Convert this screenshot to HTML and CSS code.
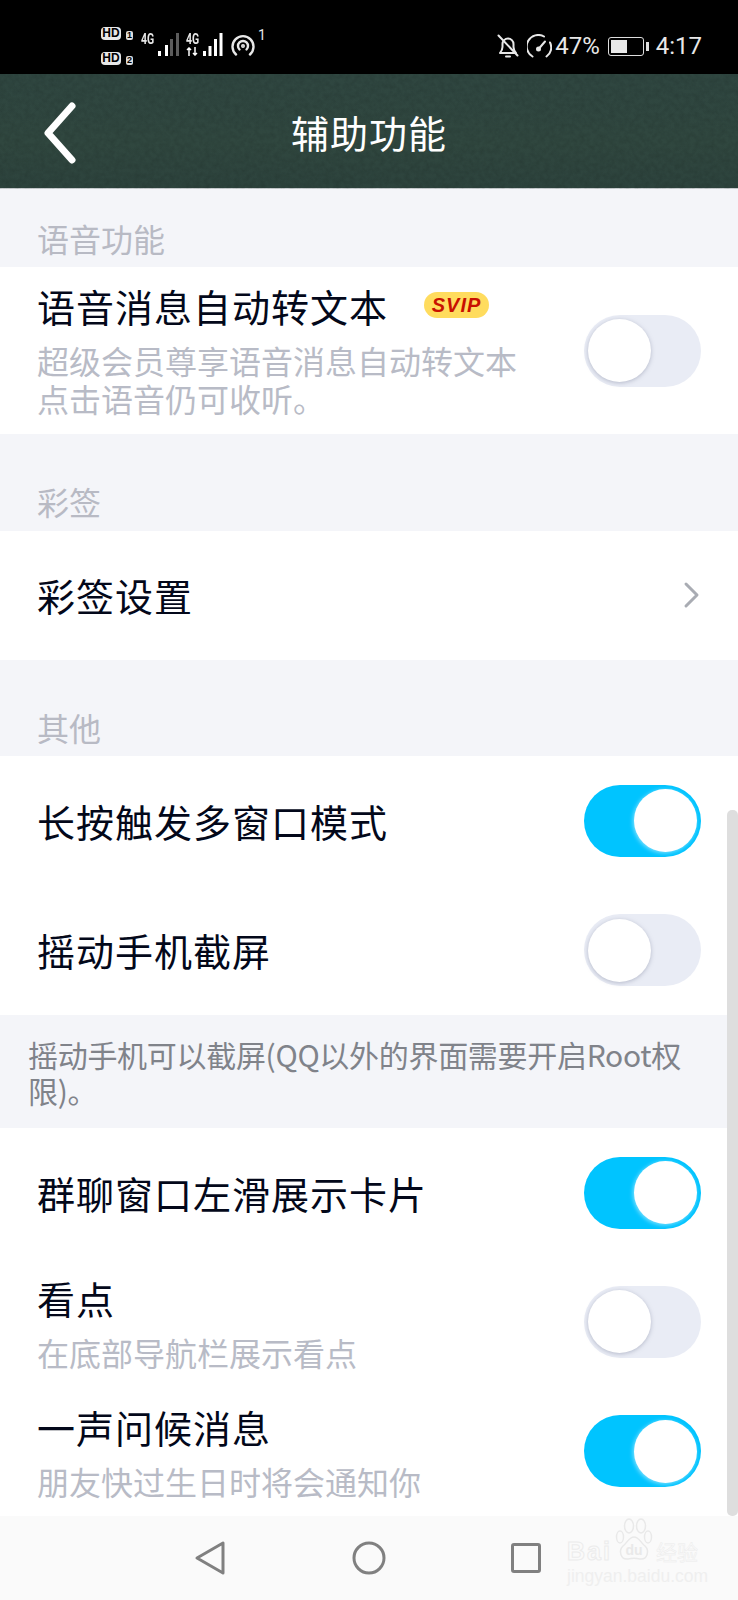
FILE: index.html
```html
<!DOCTYPE html>
<html lang="zh-CN">
<head>
  <meta charset="UTF-8">
  <meta name="viewport" content="width=device-width, initial-scale=1.0">
  <title>辅助功能</title>
  <link rel="stylesheet" href="styles.css">
</head>
<body>

<div id="phone">

  <div class="status-bar">
    <div class="status-left">
      <div class="hd-stack">
        <div class="hd-line"><span class="hd">HD</span><span class="sim">1</span></div>
        <div class="hd-line"><span class="hd">HD</span><span class="sim">2</span></div>
      </div>
      <div class="signal">
        <span class="net">4G</span>
        <svg width="24" height="24" viewBox="0 0 24 24">
          <rect x="1" y="18" width="3" height="5" fill="#fff"/>
          <rect x="8" y="12" width="3" height="11" fill="#fff"/>
          <rect x="13" y="6" width="3" height="17" fill="#5c5c5c"/>
          <rect x="19" y="0" width="3" height="23" fill="#5c5c5c"/>
        </svg>
      </div>
      <div class="signal second">
        <div class="net-stack">
          <span class="net">4G</span>
          <svg width="13" height="9" viewBox="0 0 13 9" fill="none" stroke="#fff" stroke-width="1.500">
            <path d="M3 9V1M1 3l2-2 2 2"/>
            <path d="M9 0V8M7 6l2 2 2-2"/>
          </svg>
        </div>
        <svg width="21" height="24" viewBox="0 0 21 24">
          <rect x="0" y="18" width="3" height="5" fill="#fff"/>
          <rect x="5.500" y="13" width="3" height="10" fill="#fff"/>
          <rect x="11" y="6" width="3" height="17" fill="#fff"/>
          <rect x="16.500" y="0" width="3" height="23" fill="#fff"/>
        </svg>
      </div>
      <svg class="hotspot" width="24" height="22" viewBox="0 0 24 22" fill="none" stroke="#e8e8e8" stroke-width="2.400" stroke-linecap="round">
        <path d="M5 20.500A10.500 10.500 0 1 1 19 20.500"/>
        <path d="M8.500 15.500A5 5 0 1 1 15.500 15.500"/>
        <circle cx="12" cy="12" r="0.800"/>
      </svg>
      <span class="hotspot-num">1</span>
    </div>
    <div class="status-right">
      <svg width="22" height="24" viewBox="0 0 22 24" fill="none" stroke="#e8e8e8" stroke-width="2" stroke-linecap="round" stroke-linejoin="round">
        <path d="M3 19c1.500-2 2.500-3.500 2.500-6V10c0-3 2.500-5.500 5.500-5.500s5.500 2.500 5.500 5.500v3c0 2.500 1 4 2.500 6z"/>
        <path d="M9 22.500h4"/>
        <path d="M1.500 1.500l19 20"/>
      </svg>
      <svg class="speed" width="25" height="24" viewBox="0 0 25 24" fill="none" stroke="#e8e8e8" stroke-width="2" stroke-linecap="round">
        <path d="M5.500 22.500A11 11 0 0 1 17 2.500"/>
        <path d="M23 8.500A11 11 0 0 1 19.500 22.500"/>
        <path d="M12 14.500L18 7.500"/>
        <circle cx="11.500" cy="15" r="1.500" fill="#e8e8e8"/>
      </svg>
      <span class="pct">47%</span>
      <div class="battery"><div class="battery-level"></div></div>
      <div class="battery-tip"></div>
      <span class="clock">4:17</span>
    </div>
  </div>

  <div class="header">
    <svg class="noise" width="738" height="115">
      <filter id="grain">
        <feTurbulence type="fractalNoise" baseFrequency="0.2" numOctaves="4" seed="7"/>
        <feColorMatrix values="0 0 0 0 0  0 0 0 0 0  0 0 0 0 0  1.100 0 0 0 -0.350"/>
      </filter>
      <rect width="738" height="115" filter="url(#grain)" opacity="0.16"/>
    </svg>
    <svg class="back" width="34" height="66" viewBox="0 0 34 66" fill="none" stroke="#fff" stroke-width="7" stroke-linecap="round" stroke-linejoin="round">
      <path d="M29 5L5 32L29 59"/>
    </svg>
    <span class="title">辅助功能</span>
  </div>

  <div class="section-label">语音功能</div>
  <div class="row row-voice">
    <div class="row-text">
      <div class="row-title">语音消息自动转文本<span class="svip">SVIP</span></div>
      <div class="row-sub">超级会员尊享语音消息自动转文本<br>点击语音仍可收听。</div>
    </div>
    <div class="switch"><div class="knob"></div></div>
  </div>

  <div class="section-label tall">彩签</div>
  <div class="row">
    <div class="row-title">彩签设置</div>
    <svg class="chevron" width="18" height="28" viewBox="0 0 18 28" fill="none" stroke="#a9acb3" stroke-width="3" stroke-linecap="round" stroke-linejoin="round">
      <path d="M3 3L14 14L3 25"/>
    </svg>
  </div>

  <div class="section-label tall">其他</div>
  <div class="row">
    <div class="row-title">长按触发多窗口模式</div>
    <div class="switch on"><div class="knob"></div></div>
  </div>
  <div class="row row-wide">
    <div class="row-title">摇动手机截屏</div>
    <div class="switch"><div class="knob"></div></div>
  </div>
  <div class="note">摇动手机可以截屏(QQ以外的界面需要开启Root权限)。</div>
  <div class="row">
    <div class="row-title">群聊窗口左滑展示卡片</div>
    <div class="switch on"><div class="knob"></div></div>
  </div>
  <div class="row">
    <div class="row-text">
      <div class="row-title">看点</div>
      <div class="row-sub">在底部导航栏展示看点</div>
    </div>
    <div class="switch"><div class="knob"></div></div>
  </div>
  <div class="row row-wide">
    <div class="row-text">
      <div class="row-title">一声问候消息</div>
      <div class="row-sub">朋友快过生日时将会通知你</div>
    </div>
    <div class="switch on"><div class="knob"></div></div>
  </div>

  <div class="nav-bar">
    <svg width="34" height="36" viewBox="0 0 34 36" fill="none" stroke="#808080" stroke-width="3" stroke-linejoin="round">
      <path d="M30 3V33L4 18z"/>
    </svg>
    <svg width="36" height="36" viewBox="0 0 36 36" fill="none" stroke="#808080" stroke-width="3">
      <circle cx="18" cy="18" r="15"/>
    </svg>
    <svg width="30" height="30" viewBox="0 0 30 30" fill="none" stroke="#808080" stroke-width="3" stroke-linejoin="round">
      <rect x="1.500" y="1.500" width="27" height="27" rx="1.500"/>
    </svg>
  </div>

  <div class="scrollbar"></div>

  <div class="watermark">
    <svg class="paw" width="38" height="44" viewBox="0 0 38 44" fill="none" stroke="#e9e9e9" stroke-width="1.500">
      <ellipse cx="5" cy="19" rx="3.500" ry="6"/>
      <ellipse cx="14" cy="8" rx="4.500" ry="7"/>
      <ellipse cx="26" cy="8" rx="4.500" ry="7"/>
      <ellipse cx="33" cy="19" rx="3.500" ry="6"/>
      <path d="M19 19c5 0 6 5 11 9 5 5 2 14-5 13-4-1-8-1-12 0-7 1-10-8-5-13 5-4 6-9 11-9z"/>
      <text x="19" y="37" text-anchor="middle" class="paw-du">du</text>
    </svg>
    <div class="wm-main"><span>Bai</span><span class="wm-cn">经验</span></div>
    <div class="wm-url">jingyan.baidu.com</div>
  </div>

</div>

</body>
</html>
```

FILE: styles.css
```css
* {
  box-sizing: border-box;
}

body {
  margin: 0;
  font-family: "Noto Sans CJK SC", "Noto Sans", sans-serif;
  background-color: #f4f5f9;
}

#phone {
  position: relative;
  width: 738px;
  height: 1600px;
  overflow: hidden;
  display: flex;
  flex-direction: column;
}

.status-bar {
  height: 74px;
  background-color: #000;
  color: #e8e8e8;
  display: flex;
  justify-content: space-between;
  padding: 0 36px 0 101px;
}

.status-left {
  display: flex;
  align-items: flex-start;
}

.hd-stack {
  display: flex;
  flex-direction: column;
  gap: 12px;
  padding-top: 27px;
  width: 40px;
}

.hd-line {
  display: flex;
  align-items: center;
  gap: 5px;
  height: 13px;
}

.hd {
  width: 20px;
  height: 13px;
  border-radius: 4px;
  background-color: #e8e8e8;
  color: #000;
  font: bold 12px/13px "Liberation Sans", sans-serif;
  text-align: center;
}

.sim {
  width: 7px;
  height: 9px;
  margin-top: 3px;
  border-radius: 2px;
  background-color: #ddd;
  color: #000;
  font: bold 9px/9px "Liberation Sans", sans-serif;
  text-align: center;
}

.signal {
  display: flex;
  align-items: flex-start;
  padding-top: 33px;
  margin-right: 5px;
}

.net-stack {
  display: flex;
  flex-direction: column;
  gap: 1px;
  width: 17px;
}

.net {
  display: block;
  width: 16px;
  font: bold 14px/13px Roboto, sans-serif;
  transform: scaleX(0.75);
  transform-origin: left center;
}

.hotspot {
  margin: 34px 0 0 2px;
}

.hotspot-num {
  font: 14px/14px Roboto, sans-serif;
  margin: 28px 0 0 3px;
}

.status-right {
  display: flex;
  align-items: center;
  height: 74px;
  padding-top: 18px;
}

.speed {
  margin-left: 8px;
}

.pct {
  font: 24px/30px Roboto, sans-serif;
  margin-left: 3px;
}

.battery {
  width: 36px;
  height: 19px;
  margin-left: 8px;
  padding: 2px;
  border: 1px solid #ddd;
  border-radius: 3px;
}

.battery-level {
  width: 16px;
  height: 100%;
  background-color: #e8e8e8;
}

.battery-tip {
  width: 3px;
  height: 9px;
  margin-left: 2px;
  background-color: #ddd;
}

.clock {
  font: 24px/30px Roboto, sans-serif;
  margin-left: 7px;
}

.header {
  position: relative;
  height: 115px;
  background: linear-gradient(180deg, #2f4640, #30473f 60%, #2d433d);
  border-bottom: 1px solid #c9cdd0;
  display: flex;
  align-items: center;
  justify-content: center;
}

.noise {
  position: absolute;
  left: 0;
  top: 0;
}

.back {
  position: absolute;
  left: 43px;
  top: 27px;
  filter: blur(0.6px);
}

.title {
  position: relative;
  color: #fff;
  font-size: 38px;
  letter-spacing: 1px;
}

.section-label {
  height: 78px;
  padding: 27px 0 0 37px;
  color: #b8bac4;
  font-size: 32px;
  line-height: 44px;
}

.section-label.tall {
  height: 96.5px;
  padding-top: 45px;
}

.row {
  height: 129px;
  padding: 0 37px 0 37px;
  background-color: #fff;
  display: flex;
  align-items: center;
  justify-content: space-between;
}

.row-wide {
  height: 130px;
}

.row-voice {
  height: 167px;
}

.row-voice .row-text {
  padding-bottom: 4px;
}

.row-voice .row-title {
  margin-bottom: 2px;
}

.row-title {
  color: #03081a;
  font-size: 38px;
  line-height: 50px;
  letter-spacing: 1px;
  display: flex;
  align-items: center;
}

.row-sub {
  margin-top: 10px;
  color: #b8bbc6;
  font-size: 32px;
  line-height: 38px;
}

.svip {
  width: 65px;
  height: 26px;
  margin: 0 0 1px 36px;
  border-radius: 13px;
  background-color: #ffdc5e;
  color: #c81000;
  font: italic bold 20px/26px "Liberation Sans", sans-serif;
  letter-spacing: 1px;
  text-align: center;
}

.switch {
  flex: none;
  width: 117px;
  height: 72px;
  padding-left: 4px;
  border-radius: 36px;
  background-color: #e9ecf5;
  display: flex;
  align-items: center;
}

.switch.on {
  background-color: #00c4ff;
  padding-left: 50px;
}

.knob {
  width: 63px;
  height: 63px;
  border-radius: 50%;
  background-color: #fff;
  box-shadow: 0 1px 4px rgba(130, 135, 160, 0.5);
}

.switch.on .knob {
  box-shadow: -1px 1px 4px rgba(225, 245, 255, 0.6);
}

.note {
  height: 113px;
  padding: 21px 38px 0 28px;
  color: #80838a;
  font-size: 30px;
  line-height: 36px;
  letter-spacing: -0.3px;
}

.nav-bar {
  flex: 1;
  background-color: #fafafa;
  display: flex;
  align-items: center;
  gap: 124px;
  padding: 0 0 0 193px;
}

.scrollbar {
  position: absolute;
  left: 727px;
  top: 810px;
  width: 11px;
  height: 706px;
  border-radius: 5px;
  background-color: #dedede;
}

.watermark {
  position: absolute;
  left: 567px;
  top: 1518px;
  width: 131px;
  color: #fafafa;
}

.paw {
  position: absolute;
  left: 48px;
  top: 0;
}

.paw-du {
  font: bold 14px "Liberation Sans", sans-serif;
  fill: #e9e9e9;
  stroke: none;
}

.wm-main {
  display: flex;
  justify-content: space-between;
  align-items: center;
  margin-top: 20px;
  height: 26px;
  font: bold 25px/26px "Liberation Sans", sans-serif;
  letter-spacing: 2px;
  -webkit-text-stroke: 1px #ececec;
}

.wm-cn {
  font: 21px/26px "Noto Sans CJK SC", sans-serif;
  letter-spacing: 0;
  -webkit-text-stroke: 0.5px #ececec;
}

.wm-url {
  margin-top: 4px;
  color: #efefef;
  font: 17.500px/16px "Liberation Sans", sans-serif;
  white-space: nowrap;
}
```
